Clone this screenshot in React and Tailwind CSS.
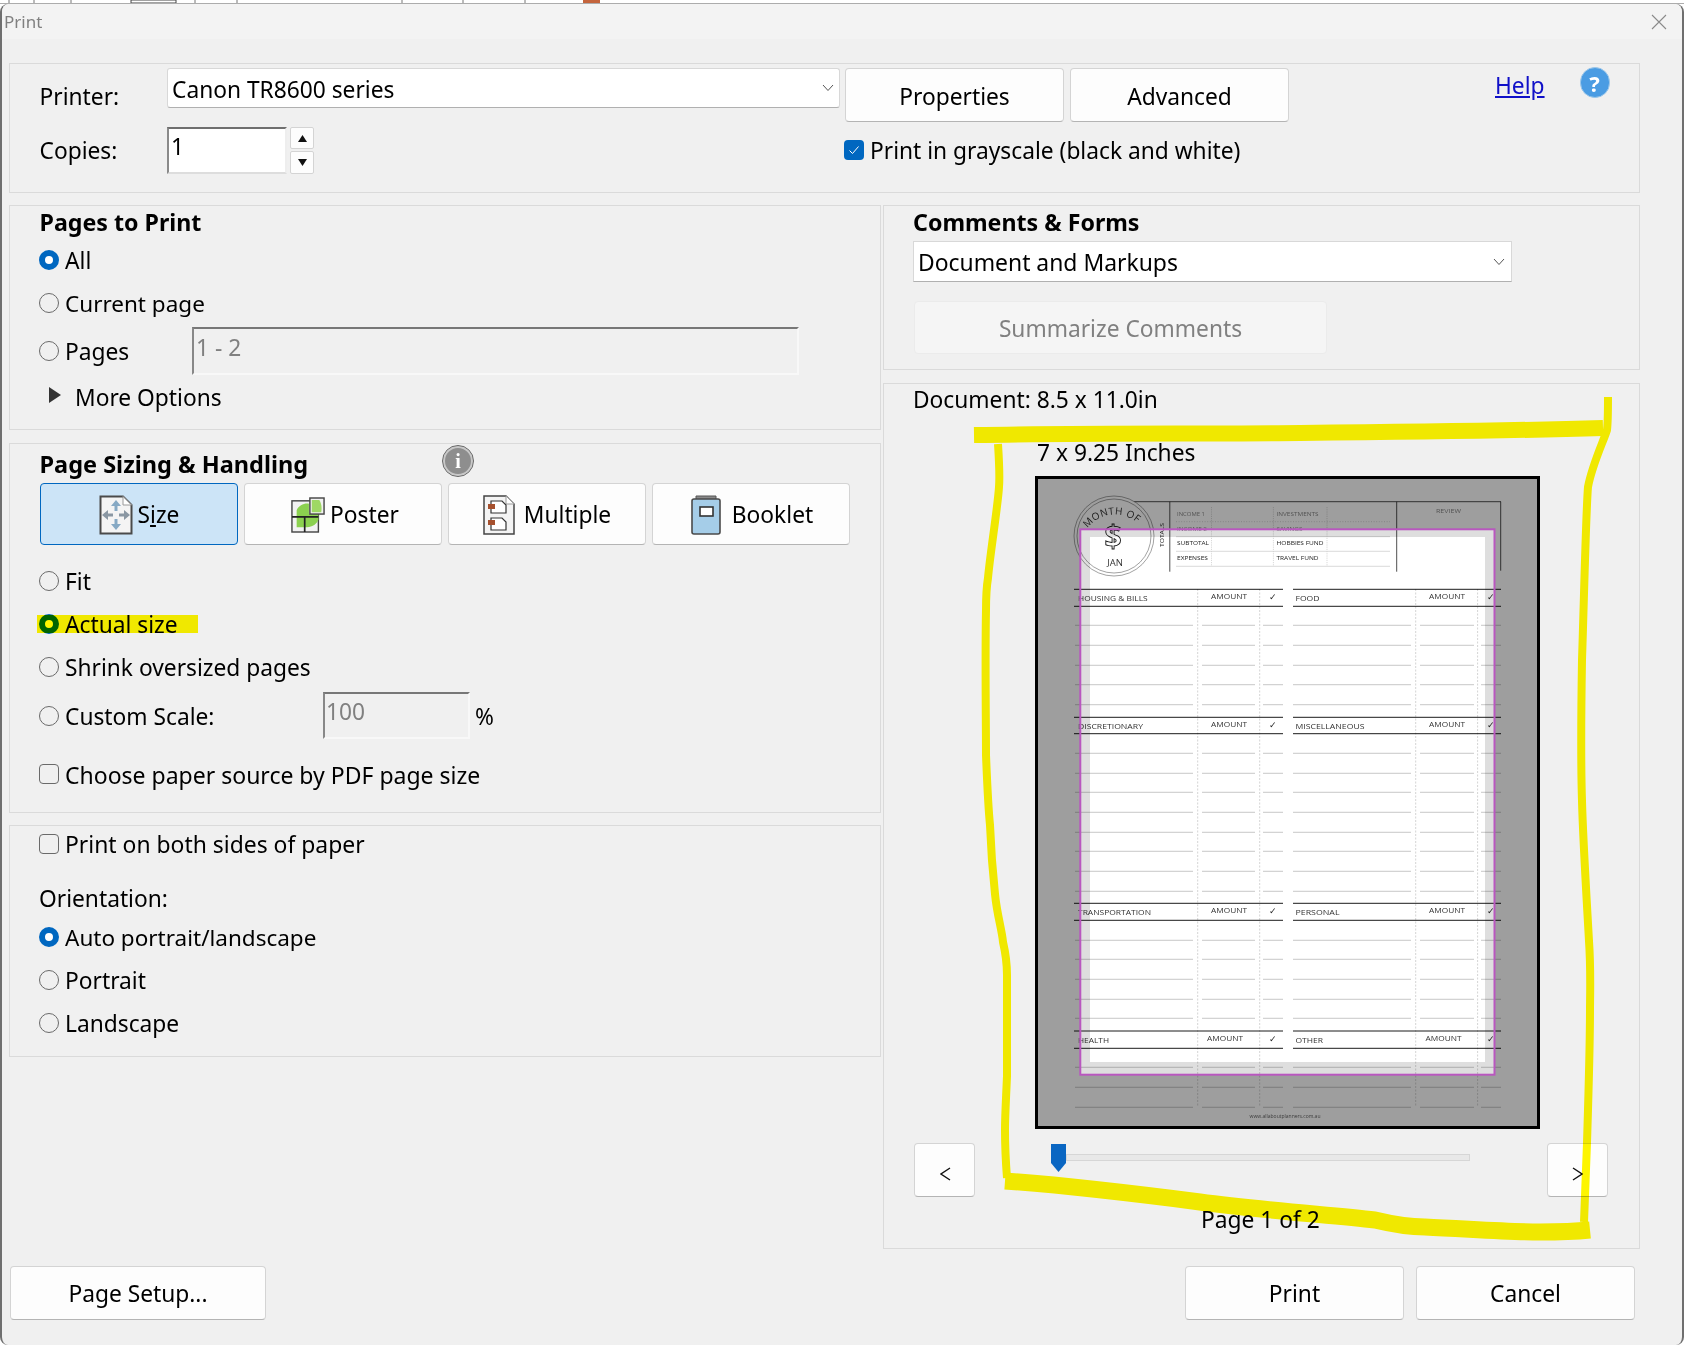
import React from "react";

const Radio = ({ on }) => (
  <span className={on
    ? "block w-5 h-5 shrink-0 rounded-full bg-white border-[6px] border-[#0067c0]"
    : "block w-5 h-5 shrink-0 rounded-full border border-[#6a6a6a]"} />
);

const Check = () => <span className="block w-5 h-5 shrink-0 rounded-[4px] border border-[#6a6a6a]" />;

const RadioRow = ({ on, children, className = "" }) => (
  <div className={"flex items-center gap-[6px] h-5 ml-[29px] " + className}>
    <Radio on={on} />
    <span className="whitespace-nowrap mt-[2px]">{children}</span>
  </div>
);

const Btn = ({ className = "", children }) => (
  <div className={"flex items-center justify-center shrink-0 bg-[#fdfdfd] border border-[#d4d4d4] border-b-[#b4b4b4] rounded-[4px] h-[54px] pt-[2px] " + className}>
    {children}
  </div>
);

const Chevron = () => (
  <svg width="12" height="8" viewBox="0 0 12 8" className="shrink-0">
    <path d="M1 1l5 5.5L11 1" fill="none" stroke="#555" strokeWidth="1" />
  </svg>
);

const Group = ({ className = "", children }) => (
  <div className={"border border-[#dadada] shrink-0 " + className}>{children}</div>
);

const SizeIcon = () => (
  <svg width="34" height="40" viewBox="0 0 34 40" className="shrink-0">
    <path d="M1.5 1.5H24L32.5 10V38.5H1.5Z" fill="#f4f4f4" stroke="#4a4a4a" strokeWidth="2" />
    <path d="M24 1.5V10H32.5Z" fill="#fff" stroke="#9a9a9a" strokeWidth="1" />
    <path d="M17 5l5 6h-3.5v5h-3v-5H12Z" fill="#86a9c4" />
    <path d="M17 35l5-6h-3.5v-5h-3v5H12Z" fill="#86a9c4" />
    <path d="M3 20l6-5v3.5h5v3H9V25Z" fill="#8a97a3" />
    <path d="M31 20l-6-5v3.5h-5v3h5V25Z" fill="#8a97a3" />
  </svg>
);

const PosterIcon = () => (
  <svg width="34" height="38" viewBox="0 0 36 38" className="shrink-0">
    <rect x="1" y="4" width="28" height="33" fill="#f2f2f2" stroke="#444" strokeWidth="1.5" />
    <path d="M6 32V14C8 9 14 6 19 7V18H29V24C27 30 20 32 15 32Z" fill="#8bd14f" />
    <rect x="20" y="1" width="15" height="17" fill="#f2f2f2" stroke="#444" strokeWidth="1.5" />
    <path d="M22 3H30C32 6 33 11 32 16H22Z" fill="#9fd864" />
    <path d="M1 21H29M14.5 21V37" stroke="#222" strokeWidth="1.8" fill="none" />
  </svg>
);

const MultipleIcon = () => (
  <svg width="32" height="40" viewBox="0 0 32 40" className="shrink-0">
    <path d="M1 1H23L31 9V39H1Z" fill="#f4f4f4" stroke="#444" strokeWidth="1.5" />
    <path d="M23 1V9H31Z" fill="#fff" stroke="#9a9a9a" strokeWidth="1" />
    <path d="M8 6H19L23 10V18H8Z" fill="#fff" stroke="#333" strokeWidth="1.2" />
    <path d="M8 23H19L23 27V35H8Z" fill="#fff" stroke="#333" strokeWidth="1.2" />
    <rect x="5" y="9" width="7" height="5" fill="#a5502e" />
    <rect x="5" y="25" width="7" height="5" fill="#a5502e" />
  </svg>
);

const BookletIcon = () => (
  <svg width="30" height="40" viewBox="0 0 30 40" className="shrink-0">
    <path d="M5 1H25V5H5Z" fill="#8a8a8a" stroke="#555" strokeWidth="1" />
    <rect x="1" y="4" width="28" height="35" rx="2" fill="#a5cde8" stroke="#4a4a4a" strokeWidth="1.6" />
    <rect x="9" y="12" width="13" height="9" fill="#fff" stroke="#333" strokeWidth="1.6" />
  </svg>
);

const sections = [
  { t: 589.3, b: 606.3, a: 1211, a2: 1429, l: "HOUSING & BILLS", lw: 69.6, r: "FOOD", rw: 24, rows: [625.3, 645.3, 665.3, 684.7, 704.7] },
  { t: 717.3, b: 733.7, a: 1211, a2: 1429, l: "DISCRETIONARY", lw: 65, r: "MISCELLANEOUS", rw: 69, rows: [753.3, 773.3, 792.3, 812.3, 832.3, 851.3, 871.3, 891.3] },
  { t: 903.3, b: 920.3, a: 1211, a2: 1429, l: "TRANSPORTATION", lw: 73, r: "PERSONAL", rw: 44, rows: [940.3, 959.3, 979.3, 999.3, 1018.3] },
  { t: 1031, b: 1048.3, a: 1207, a2: 1425.6, l: "HEALTH", lw: 31, r: "OTHER", rw: 27.5, rows: [1067.3, 1087.3, 1107.3] },
];
const segs = [[1075, 1193], [1202, 1255], [1263, 1283], [1293, 1411], [1420, 1474], [1481, 1501]];
const mono = "Open Sans, sans-serif";

const Preview = () => (
  <svg viewBox="1038 479 499 647" className="block w-full h-full bg-white" fontFamily={mono}>
    {[1197.7, 1259.7, 1415.7, 1477.6].map((x) => (
      <path key={x} d={`M${x} 589V1107`} stroke="#c8c8c8" strokeWidth="0.8" strokeDasharray="2 1.5" />
    ))}
    {sections.map((s) => (
      <g key={s.l}>
        {s.rows.map((y) =>
          segs.map(([a, b]) => <path key={y + "-" + a} d={`M${a} ${y}H${b}`} stroke="#b0b0b0" strokeWidth="0.7" />)
        )}
        {[s.t, s.b].map((y) => (
          <g key={y}>
            <path d={`M1074 ${y}H1283`} stroke="#000" strokeWidth="0.9" />
            <path d={`M1293 ${y}H1501`} stroke="#000" strokeWidth="0.9" />
          </g>
        ))}
        <text x="1078" y={s.t + 11.5} fontSize="7.5" fill="#333" textLength={s.lw} lengthAdjust="spacingAndGlyphs">{s.l}</text>
        <text x="1295.5" y={s.t + 11.5} fontSize="7.5" fill="#333" textLength={s.rw} lengthAdjust="spacingAndGlyphs">{s.r}</text>
        <text x={s.a} y={s.t + 10} fontSize="7.5" fill="#333" textLength="36" lengthAdjust="spacingAndGlyphs">AMOUNT</text>
        <text x={s.a2} y={s.t + 10} fontSize="7.5" fill="#333" textLength="36" lengthAdjust="spacingAndGlyphs">AMOUNT</text>
        <text x="1269" y={s.t + 11} fontSize="9" fill="#222" fontFamily="DejaVu Sans, sans-serif">✓</text>
        <text x="1487" y={s.t + 11} fontSize="9" fill="#222" fontFamily="DejaVu Sans, sans-serif">✓</text>
      </g>
    ))}

    <path d="M1133.6 501.7H1501M1169.8 501.7V571.7M1396.7 501.7V571.7M1500.7 501.7V570.7" stroke="#222" strokeWidth="0.8" fill="none" />
    {[536.7, 551.3, 566.3].map((y) => <path key={y} d={`M1176 ${y}H1390`} stroke="#d0d0d0" strokeWidth="0.8" />)}
    <path d="M1176 521.7H1390" stroke="#c4c4c4" strokeWidth="0.7" strokeDasharray="1 1.6" />
    {[1211.5, 1273.4, 1327].map((x) => <path key={x} d={`M${x} 507V566`} stroke="#cfcfcf" strokeWidth="0.8" strokeDasharray="1.2 1" />)}
    {[["INCOME 1", 1177, 516, 28, "#888"], ["INVESTMENTS", 1276.5, 516, 42, "#888"], ["INCOME 2", 1177, 530.7, 30, "#888"], ["SAVINGS", 1276.5, 530.7, 26, "#888"], ["SUBTOTAL", 1177, 545, 32, "#222"], ["HOBBIES FUND", 1276.5, 545, 47, "#222"], ["EXPENSES", 1177, 560, 31, "#222"], ["TRAVEL FUND", 1276.5, 560, 42, "#222"], ["REVIEW", 1436, 513.3, 25, "#888"]].map(([t, x, y, w, c]) => (
      <text key={t} x={x} y={y} fontSize="5.8" fill={c} textLength={w} lengthAdjust="spacingAndGlyphs">{t}</text>
    ))}
    <text x="1164" y="547" fontSize="5.5" fill="#222" transform="rotate(-90 1164 547)" textLength="24" lengthAdjust="spacingAndGlyphs">TOTALS</text>

    <circle cx="1114" cy="536" r="40" fill="#fff" stroke="#444" strokeWidth="0.5" />
    <circle cx="1114" cy="536" r="37" fill="#fff" stroke="#444" strokeWidth="0.5" />
    <defs>
      <path id="stampArc" d="M1087 529A34 34 0 0 1 1142 528" />
    </defs>
    <text fontSize="10" fill="#333" fontWeight="500" letterSpacing="0.4">
      <textPath href="#stampArc" startOffset="1">MONTH OF</textPath>
    </text>
    <text x="1113" y="547" fontSize="30" textAnchor="middle" fontWeight="700" fill="#fff" stroke="#111" strokeWidth="0.9">$</text>
    <text x="1115" y="566" fontSize="9.5" textAnchor="middle" fill="#333">JAN</text>
    <text x="1285" y="1118" fontSize="5" textAnchor="middle" fill="#666">www.allaboutplanners.com.au</text>

    <path fillRule="evenodd" d="M1038 479H1537V1126H1038ZM1080.3 529.3V1074.7H1494.5V529.3Z" fill="#000" opacity="0.38" />
    <path fillRule="evenodd" d="M1080.3 529.3H1494.5V1074.7H1080.3ZM1090 537V1062H1485V537Z" fill="#000" opacity="0.13" />
    <rect x="1080.3" y="529.3" width="414.2" height="545.4" fill="none" stroke="#b957bf" strokeWidth="2" />
  </svg>
);

export default function App() {
  return (
    <div className="relative w-[1684px] h-[1345px] overflow-hidden bg-white text-[22.75px] leading-none text-black font-['Noto_Sans','Open_Sans',sans-serif]">
      <svg width="1684" height="4" className="block">
        <rect width="1684" height="4" fill="#fff" />
        <path d="M9 0V3M34 0V3M71 0V3M195 0V3M237 0V3M402 0V3M463 0V3M525 0V3" stroke="#777" strokeWidth="1" />
        <rect x="131" y="0" width="45" height="3" fill="none" stroke="#444" strokeWidth="1" />
        <rect x="583" y="0" width="17" height="3" fill="#c4643c" />
        <rect y="3" width="1684" height="1" fill="#acacac" />
      </svg>
      <div className="h-[1341px] bg-[#f0f0f0] border-x-2 border-[#6f6f6f] rounded-t-[8px] rounded-b-[8px]">
        <div className="flex items-center justify-between h-[35px] bg-[#f3f3f3] rounded-t-[8px] pl-[2px] pr-[15px]">
          <span className="text-[17px] text-[#808080]">Print</span>
          <svg width="16" height="16" viewBox="0 0 16 16">
            <path d="M1 1l14 14M15 1L1 15" stroke="#8a8a8a" strokeWidth="1.1" />
          </svg>
        </div>

        <div className="pl-[7px] pt-[24px]">
          <Group className="w-[1631px] h-[130px]">
            <div className="flex items-start mt-[4px] ml-[29.5px]">
              <div className="w-[127.5px] h-[54px] pt-[5px] flex items-center shrink-0">Printer:</div>
              <div className="flex items-center justify-between shrink-0 w-[673px] h-[40px] pl-[4px] pr-[5px] bg-white border border-[#d8d8d8] border-b-[#b0b0b0] rounded-[3px]">
                <span className="mt-[5px]">Canon TR8600 series</span>
                <Chevron />
              </div>
              <Btn className="w-[219px] ml-[5px] !pt-[4px]">Properties</Btn>
              <Btn className="w-[219px] ml-[6px] !pt-[4px]">Advanced</Btn>
              <a className="ml-[206px] mt-[7px] h-[26px] text-[#1010c8] underline underline-offset-2">Help</a>
              <div className="ml-[35px] -mt-px w-[30px] h-[31px] flex items-center justify-center rounded-full bg-[#4a9ce3] border border-[#9cc7ea] text-white text-[22px] font-bold shrink-0">?</div>
            </div>
            <div className="flex items-start mt-[5px] ml-[29.5px]">
              <div className="w-[127.5px] h-[47px] pt-[2px] flex items-center shrink-0">Copies:</div>
              <div className="w-[120px] h-[47px] bg-white border-2 border-t-[#6f6f6f] border-l-[#8a8a8a] border-r-[#eee] border-b-[#ddd] pl-[2px] pt-[7px] shrink-0">1</div>
              <div className="ml-[3px] w-[24px] h-[47px] flex flex-col justify-between shrink-0">
                <div className="h-[22px] bg-[#fdfdfd] border border-[#d4d4d4] rounded-[2px] flex items-center justify-center">
                  <svg width="9" height="7" viewBox="0 0 9 7"><path d="M4.5 0L9 7H0Z" fill="#111" /></svg>
                </div>
                <div className="h-[23px] bg-[#fdfdfd] border border-[#d4d4d4] rounded-[2px] flex items-center justify-center">
                  <svg width="9" height="7" viewBox="0 0 9 7"><path d="M4.5 7L9 0H0Z" fill="#111" /></svg>
                </div>
              </div>
              <div className="flex items-center gap-[6px] ml-[530px] mt-[13px] h-5">
                <span className="flex items-center justify-center w-5 h-5 rounded-[4px] bg-[#0067c0]">
                  <svg width="12" height="10" viewBox="0 0 12 10"><path d="M1.5 5.5L4.5 8.5L10.5 1.5" fill="none" stroke="#fff" strokeWidth="1" /></svg>
                </span>
                <span className="whitespace-nowrap mt-[2px]">Print in grayscale (black and white)</span>
              </div>
            </div>
          </Group>

          <div className="flex gap-[2px] mt-[12px]">
            <div className="w-[872px] shrink-0 flex flex-col">
              <Group className="h-[225px]">
                <div className="mt-[1px] h-[30px] leading-[30px] ml-[29.5px] font-bold text-[23.2px]">Pages to Print</div>
                <RadioRow on className="mt-[13px]">All</RadioRow>
                <RadioRow className="mt-[23px] text-[22.5px]">Current page</RadioRow>
                <div className="flex items-center h-[48px] mt-[14px] ml-[29px]">
                  <Radio />
                  <span className="ml-[6px] w-[127px] mt-[2px]">Pages</span>
                  <div className="w-[607px] h-[48px] border-2 border-t-[#777] border-l-[#888] border-r-[#f8f8f8] border-b-[#f8f8f8] pl-[2px] pt-[8px] text-[#808080]">1 - 2</div>
                </div>
                <div className="flex items-center h-[24px] mt-[11px] ml-[39px]">
                  <svg width="12" height="16" viewBox="0 0 12 16" className="shrink-0 -mt-[6px]"><path d="M0 0L12 8L0 16Z" fill="#333" /></svg>
                  <span className="ml-[14px]">More Options</span>
                </div>
              </Group>

              <Group className="h-[370px] mt-[13px] relative">
                <div className="flex items-start h-[30px] mt-[2px] ml-[29.5px]">
                  <span className="w-[403.5px] shrink-0 font-bold mt-[7px] text-[23.5px]">Page Sizing &amp; Handling</span>
                  <div className="w-[30px] h-[30px] rounded-full bg-[#8e8e8e] border-2 border-[#c8c8c8] outline outline-1 outline-[#666] flex items-center justify-center text-white font-bold text-[20px] shrink-0 font-['Liberation_Serif',serif]">i</div>
                </div>
                <div className="flex gap-[6px] mt-[7px] ml-[30px]">
                  <Btn className="w-[198px] !h-[62px] gap-[5px] !bg-[#cce4f7] !border-[#0067c0]">
                    <SizeIcon /><span>S<u>i</u>ze</span>
                  </Btn>
                  <Btn className="w-[198px] !h-[62px] gap-[5px] pl-[4px]"><PosterIcon /><span>Poster</span></Btn>
                  <Btn className="w-[198px] !h-[62px] gap-[9px]"><MultipleIcon /><span>Multiple</span></Btn>
                  <Btn className="w-[198px] !h-[62px] gap-[11px] pl-[2px]"><BookletIcon /><span>Booklet</span></Btn>
                </div>
                <RadioRow className="mt-[26px]">Fit</RadioRow>
                <div className="relative">
                  <RadioRow on className="mt-[23px]">Actual size</RadioRow>
                  <span className="absolute left-[27px] top-[1px] w-[161px] h-[18px] bg-[#fff700] mix-blend-multiply" />
                </div>
                <RadioRow className="mt-[23px]">Shrink oversized pages</RadioRow>
                <div className="flex items-center h-[47px] mt-[15px] ml-[29px]">
                  <Radio />
                  <span className="ml-[6px] w-[258px] mt-[3px]">Custom Scale:</span>
                  <div className="w-[147px] h-[47px] border-2 border-t-[#777] border-l-[#888] border-r-[#f8f8f8] border-b-[#f8f8f8] pl-[1px] pt-[7px] text-[#808080]">100</div>
                  <span className="ml-[5px] mt-[3px]">%</span>
                </div>
                <div className="flex items-center gap-[6px] h-5 mt-[25px] ml-[29px]">
                  <Check /><span className="mt-[2px] text-[23px]">Choose paper source by PDF page size</span>
                </div>
              </Group>

              <Group className="h-[232px] mt-[12px]">
                <div className="flex items-center gap-[6px] h-5 mt-[8px] ml-[29px]">
                  <Check /><span className="mt-[2px] text-[22.9px]">Print on both sides of paper</span>
                </div>
                <div className="h-[24px] leading-[24px] mt-[33px] ml-[29px]">Orientation:</div>
                <RadioRow on className="mt-[16px] text-[22.5px]">Auto portrait/landscape</RadioRow>
                <RadioRow className="mt-[23px]">Portrait</RadioRow>
                <RadioRow className="mt-[23px]">Landscape</RadioRow>
              </Group>
            </div>

            <div className="w-[757px] shrink-0 flex flex-col">
              <Group className="h-[165px]">
                <div className="mt-[1px] h-[30px] leading-[30px] ml-[29px] font-bold text-[23.2px]">Comments &amp; Forms</div>
                <div className="flex items-center justify-between w-[599px] h-[41px] mt-[4px] ml-[29px] pl-[4px] pr-[6px] bg-white border border-[#d8d8d8] border-b-[#b0b0b0]">
                  <span className="mt-[3px] text-[22.9px]">Document and Markups</span>
                  <Chevron />
                </div>
                <div className="flex items-center justify-center w-[413px] h-[53px] pt-[3px] mt-[19px] ml-[30px] bg-[#f5f5f5] border border-[#ebebeb] rounded-[4px] text-[#808080]">Summarize Comments</div>
              </Group>

              <Group className="h-[866px] mt-[13px]">
                <div className="h-[24px] leading-[24px] mt-[4px] ml-[29px]">Document: 8.5 x 11.0in</div>
                <div className="h-[24px] leading-[24px] mt-[29px] ml-[153px]">7 x 9.25 Inches</div>
                <div className="w-[505px] h-[653px] mt-[11px] ml-[151px] border-[3px] border-black">
                  <Preview />
                </div>
                <div className="flex items-start mt-[14px] ml-[30px] h-[54px]">
                  <Btn className="w-[61px]">
                    <svg width="11" height="14" viewBox="0 0 11 14" className="mt-[5px] ml-[1px]"><path d="M10 1L1 7L10 13" fill="none" stroke="#111" strokeWidth="1.4" /></svg>
                  </Btn>
                  <div className="flex items-start ml-[76px] mt-px w-[419px] h-[28px]">
                    <svg width="15" height="28" viewBox="0 0 15 28" className="shrink-0"><path d="M0 0H15V19L7.5 28L0 19Z" fill="#0a66c2" /></svg>
                    <div className="w-[404px] h-[7px] mt-[10px] bg-[#e8e8e8] border border-[#d6d6d6]" />
                  </div>
                  <Btn className="w-[61px] ml-[77px]">
                    <svg width="11" height="14" viewBox="0 0 11 14" className="mt-[5px]"><path d="M1 1L10 7L1 13" fill="none" stroke="#111" strokeWidth="1.4" /></svg>
                  </Btn>
                </div>
                <div className="h-[24px] leading-[24px] mt-[11px] ml-[317px]">Page 1 of 2</div>
              </Group>
            </div>
          </div>

          <div className="flex mt-[17px] ml-px">
            <Btn className="w-[256px]">Page Setup...</Btn>
            <Btn className="w-[219px] ml-[919px]">Print</Btn>
            <Btn className="w-[219px] ml-[12px]">Cancel</Btn>
          </div>
        </div>
      </div>

      <svg viewBox="0 0 1684 1345" className="absolute inset-0 w-[1684px] h-[1345px] pointer-events-none mix-blend-multiply" fill="none" stroke="#fff700" strokeLinejoin="round">
        <path strokeWidth="16" d="M974 435C1100 433 1200 434 1300 433C1400 432 1500 431 1603 428" />
        <path strokeWidth="8" d="M1608 397C1608 412 1608 422 1607 430C1604 440 1592 465 1588 487C1586 510 1584 600 1582 660C1581 720 1581 770 1582 801C1583 840 1587 905 1589 941C1591 970 1590 1000 1590 1008C1590 1050 1588 1110 1587 1143C1586 1175 1585 1200 1584 1222" />
        <path strokeWidth="8" d="M998 444C999 460 1000 475 999 487C998 505 990 555 988 578C986 590 986 600 986 610C985 660 986 720 986 755C987 780 988 805 990 825C991 850 993 875 995 894C997 915 1002 930 1003 942C1006 955 1007 965 1007 975C1007 1010 1007 1050 1007 1076C1006 1100 1005 1115 1005 1130C1005 1150 1006 1165 1007 1178" />
        <path strokeWidth="17" d="M1005 1181C1060 1185 1130 1193 1200 1202C1260 1210 1330 1215 1375 1220C1400 1226 1420 1227 1425 1227C1470 1229 1510 1232 1540 1232C1560 1232 1580 1231 1590 1230" />
      </svg>
    </div>
  );
}
